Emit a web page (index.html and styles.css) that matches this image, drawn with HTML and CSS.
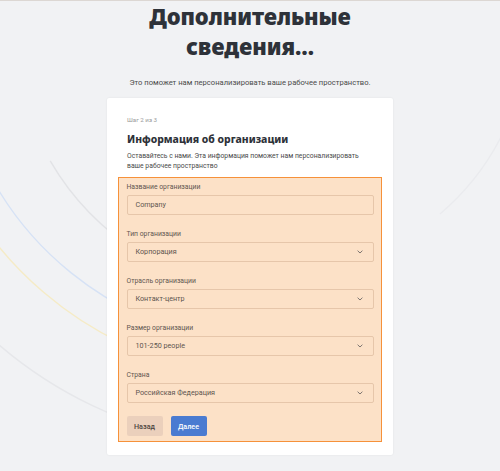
FILE: index.html
```html
<!DOCTYPE html>
<html lang="ru">
<head>
<meta charset="utf-8">
<link rel="stylesheet" href="styles.css">
</head>
<body>
<svg class="bg-arcs" width="500" height="471" viewBox="0 0 500 471" aria-hidden="true">
  <path d="M 50.2 159.9 A 265 265 0 0 0 140.5 252.5" class="arc-gray"/>
  <path d="M 217.4 338.1 A 320 320 0 0 1 -24.5 143.0" class="arc-blue"/>
  <path d="M 211.7 370.6 A 353 353 0 0 1 -60.7 138.3" class="arc-yellow"/>
  <path d="M 200 439 A 422 422 0 0 1 -2 343" class="arc-gray2"/>
  <path d="M 505 128 A 252 252 0 0 1 440 213" class="arc-faint"/>
</svg>
<main class="page">
  <h1 class="headline">Дополнительные<br>сведения…</h1>
  <p class="lead">Это поможет нам персонализировать ваше рабочее пространство.</p>
  <section class="card">
    <div class="card-head">
      <div class="step">Шаг 2 из 3</div>
      <h2 class="title">Информация об организации</h2>
      <p class="desc">Оставайтесь с нами. Эта информация поможет нам персонализировать ваше рабочее пространство</p>
    </div>
    <form class="form">
      <div class="field">
        <label class="label">Название организации</label>
        <div class="control"><span>Company</span></div>
      </div>
      <div class="field">
        <label class="label">Тип организации</label>
        <div class="control"><span>Корпорация</span><svg class="chev" width="6" height="4" viewBox="0 0 6 4"><path d="M0.6 0.7 L3 3 L5.4 0.7"/></svg></div>
      </div>
      <div class="field">
        <label class="label">Отрасль организации</label>
        <div class="control"><span>Контакт-центр</span><svg class="chev" width="6" height="4" viewBox="0 0 6 4"><path d="M0.6 0.7 L3 3 L5.4 0.7"/></svg></div>
      </div>
      <div class="field">
        <label class="label">Размер организации</label>
        <div class="control"><span>101-250 people</span><svg class="chev" width="6" height="4" viewBox="0 0 6 4"><path d="M0.6 0.7 L3 3 L5.4 0.7"/></svg></div>
      </div>
      <div class="field">
        <label class="label">Страна</label>
        <div class="control"><span>Российская Федерация</span><svg class="chev" width="6" height="4" viewBox="0 0 6 4"><path d="M0.6 0.7 L3 3 L5.4 0.7"/></svg></div>
      </div>
      <div class="actions">
        <button type="button" class="btn btn-back">Назад</button>
        <button type="button" class="btn btn-next">Далее</button>
      </div>
    </form>
  </section>
</main>
</body>
</html>
```
FILE: styles.css
```css
* { box-sizing: border-box; }
html, body { margin: 0; padding: 0; }
body {
  width: 500px;
  height: 471px;
  overflow: hidden;
  background: #f1f2f4;
  border-top: 1px solid #dcd7d3;
  font-family: "Roboto", "Noto Sans", sans-serif;
  color: #333;
  position: relative;
}
.bg-arcs {
  position: absolute;
  left: 0;
  top: 0;
  z-index: 0;
}
.bg-arcs path { fill: none; stroke-width: 1.4; }
.arc-gray { stroke: #e2e3e6; }
.arc-blue { stroke: #d6e2f5; }
.arc-yellow { stroke: #f5ebc6; }
.arc-gray2 { stroke: #e6e7ea; }
.arc-faint { stroke: #eaebee; }

.page {
  position: relative;
  z-index: 1;
  display: flex;
  flex-direction: column;
  align-items: center;
}
.headline {
  margin: 0;
  font-family: "Noto Sans", "Open Sans", sans-serif;
  font-size: 22px;
  line-height: 30px;
  font-weight: 900;
  color: #2e3239;
  text-align: center;
  letter-spacing: -0.1px;
}
.lead {
  margin: 17px 0 0;
  font-size: 7.6px;
  line-height: 10px;
  color: #4a4a4a;
}
.card {
  margin-top: 10px;
  width: 286px;
  background: #fff;
  border-radius: 2px;
  box-shadow: 0 0 2px rgba(0,0,0,0.08);
  padding: 18px 11px 13px;
}
.card-head { padding: 0 9px; }
.step {
  font-size: 6.2px;
  line-height: 9px;
  color: #9a9a9a;
}
.title {
  margin: 7px 0 0;
  font-family: "Noto Sans", "Open Sans", sans-serif;
  font-size: 10.4px;
  line-height: 14px;
  font-weight: 800;
  color: #2e3239;
}
.desc {
  margin: 5px 0 0;
  font-size: 6.8px;
  line-height: 10px;
  color: #4a4a4a;
}
.form {
  margin: 6px 0 0;
  background: #fce1c7;
  border: 1.5px solid #f6913a;
  padding: 3.5px 7.5px 5px;
  display: flex;
  flex-direction: column;
  gap: 14px;
}
.field { display: flex; flex-direction: column; }
.label {
  font-size: 6.8px;
  line-height: 10px;
  color: #5f5650;
  margin-bottom: 3px;
}
.control {
  height: 20px;
  border: 1px solid #e6c6aa;
  border-radius: 2px;
  display: flex;
  align-items: center;
  justify-content: space-between;
  padding: 0 10px 0 8px;
  font-size: 7.2px;
  color: #5c554f;
}
.chev path { fill: none; stroke: #7d7570; stroke-width: 1; }
.actions {
  display: flex;
  gap: 8px;
  margin-top: -0.5px;
}
.btn {
  width: 36px;
  height: 20px;
  border: none;
  border-radius: 2px;
  font-family: inherit;
  font-size: 7.2px;
  font-weight: 500;
  padding: 0;
}
.btn-back { background: #ebd0bc; color: #4d4540; }
.btn-next { background: #4a7bd1; color: #fff; }
```
